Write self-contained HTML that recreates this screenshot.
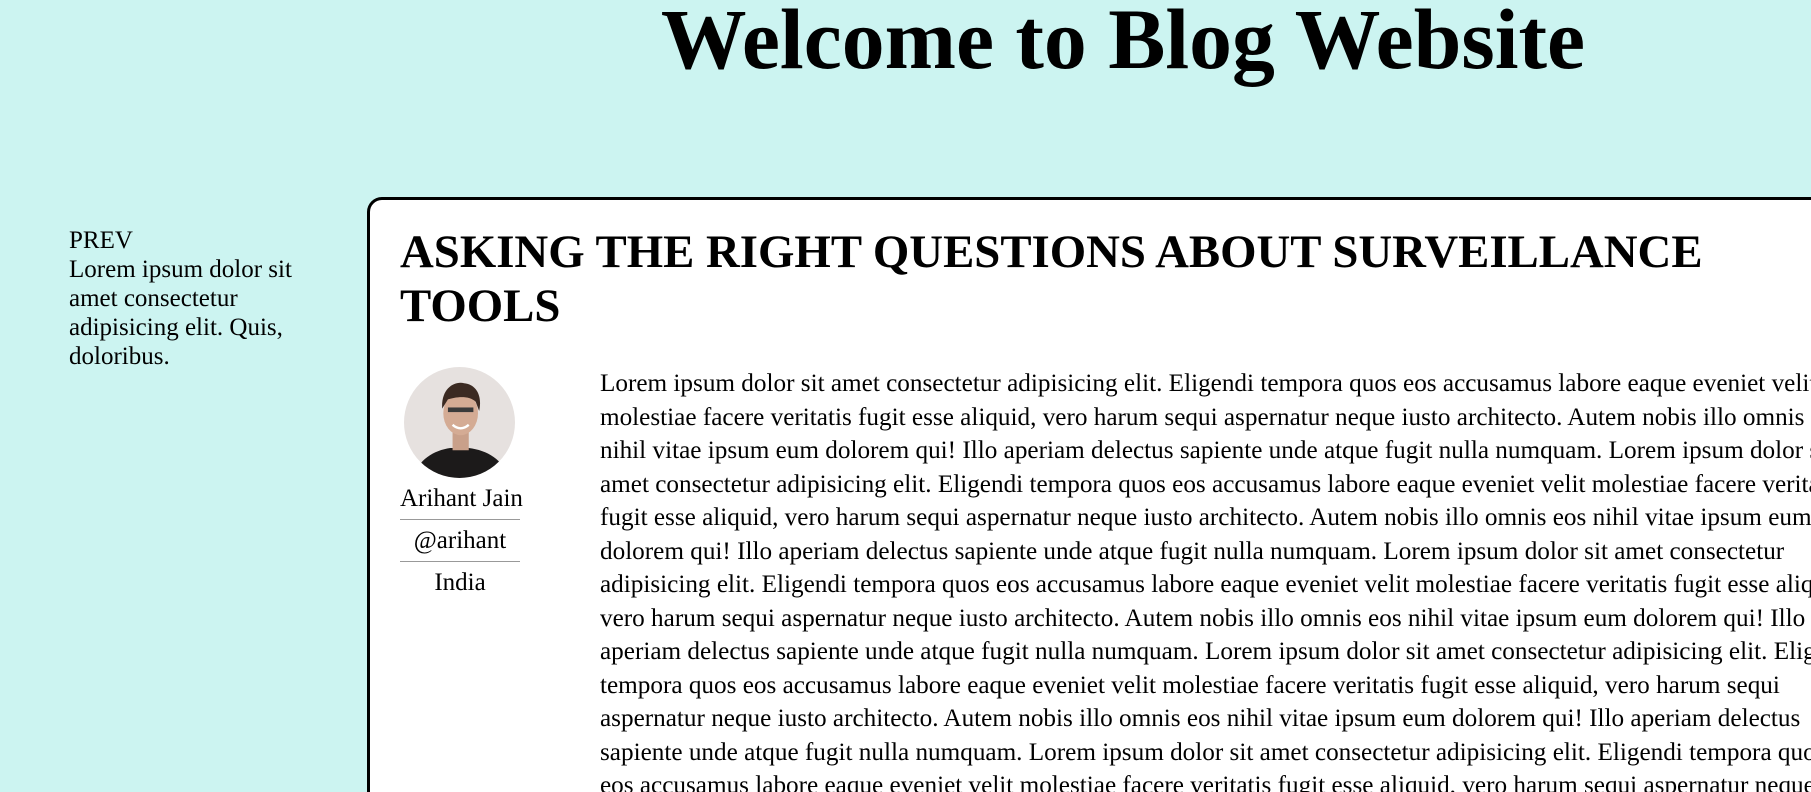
<!DOCTYPE html>
<html><head><meta charset="utf-8"><style>
html,body{margin:0;padding:0;width:1811px;height:792px;overflow:hidden;background:#ccf4f1;font-family:"Liberation Serif",serif;color:#000}
.wrap{position:relative;width:1811px;height:792px;overflow:hidden}
h1.main{position:absolute;left:0;width:2246px;text-align:center;top:-3px;margin:0;font-size:85.7px;line-height:86px;font-weight:bold;white-space:nowrap}
.side{position:absolute;left:69px;top:226px;width:260px;font-size:25px;line-height:29px}
.card{position:absolute;left:367px;top:197px;width:1700px;height:800px;background:#fff;border:3.5px solid #000;border-radius:15px;overflow:hidden}
.card h2{position:absolute;left:30px;top:25px;margin:0;width:1350px;font-size:46.8px;line-height:54px;font-weight:bold}
.author{position:absolute;left:30px;top:167px;width:120px;text-align:center;font-size:25px;white-space:nowrap}
.author svg{display:block;margin:0 0 0 4px}
.author div{line-height:41px;border-bottom:1px solid #999}
.author div:last-child{border:none}
.text{position:absolute;left:230px;top:167px;width:1260px;font-size:25.2px;line-height:33.5px}
</style></head><body><div class="wrap">
<h1 class="main">Welcome to Blog Website</h1>
<div class="side">PREV<br>Lorem ipsum dolor sit amet consectetur adipisicing elit. Quis, doloribus.</div>
<div class="card">
<h2>ASKING THE RIGHT QUESTIONS ABOUT SURVEILLANCE TOOLS</h2>
<div class="author">
<svg width="111" height="111" viewBox="0 0 96 96"><defs><clipPath id="c"><circle cx="48" cy="48" r="48"/></clipPath></defs><g clip-path="url(#c)"><rect width="96" height="96" fill="#e6e1df"/><path d="M8 96 C12 80 26 72 40 70 L56 70 C72 72 86 80 90 96Z" fill="#1c1a1a"/><rect x="42" y="56" width="14" height="16" fill="#c9a08a"/><ellipse cx="49" cy="40" rx="15" ry="19" fill="#d4ab94"/><path d="M33 36 C32 18 44 12 52 14 C62 15 68 24 65 38 L62 30 C56 24 44 26 38 28 Z" fill="#3b2a22"/><rect x="38" y="35" width="22" height="4" fill="#3a3a3a"/><path d="M42 50 Q49 56 56 50" stroke="#fff" stroke-width="2" fill="none"/></g></svg>
<div>Arihant Jain</div><div>@arihant</div><div>India</div>
</div>
<div class="text">Lorem ipsum dolor sit amet consectetur adipisicing elit. Eligendi tempora quos eos accusamus labore eaque eveniet velit molestiae facere veritatis fugit esse aliquid, vero harum sequi aspernatur neque iusto architecto. Autem nobis illo omnis eos nihil vitae ipsum eum dolorem qui! Illo aperiam delectus sapiente unde atque fugit nulla numquam. Lorem ipsum dolor sit amet consectetur adipisicing elit. Eligendi tempora quos eos accusamus labore eaque eveniet velit molestiae facere veritatis fugit esse aliquid, vero harum sequi aspernatur neque iusto architecto. Autem nobis illo omnis eos nihil vitae ipsum eum dolorem qui! Illo aperiam delectus sapiente unde atque fugit nulla numquam. Lorem ipsum dolor sit amet consectetur adipisicing elit. Eligendi tempora quos eos accusamus labore eaque eveniet velit molestiae facere veritatis fugit esse aliquid, vero harum sequi aspernatur neque iusto architecto. Autem nobis illo omnis eos nihil vitae ipsum eum dolorem qui! Illo aperiam delectus sapiente unde atque fugit nulla numquam. Lorem ipsum dolor sit amet consectetur adipisicing elit. Eligendi tempora quos eos accusamus labore eaque eveniet velit molestiae facere veritatis fugit esse aliquid, vero harum sequi aspernatur neque iusto architecto. Autem nobis illo omnis eos nihil vitae ipsum eum dolorem qui! Illo aperiam delectus sapiente unde atque fugit nulla numquam. Lorem ipsum dolor sit amet consectetur adipisicing elit. Eligendi tempora quos eos accusamus labore eaque eveniet velit molestiae facere veritatis fugit esse aliquid, vero harum sequi aspernatur neque iusto architecto. Autem nobis illo omnis eos nihil vitae ipsum eum dolorem qui! Illo aperiam delectus sapiente unde atque fugit nulla numquam.</div>
</div>
</div></body></html>
